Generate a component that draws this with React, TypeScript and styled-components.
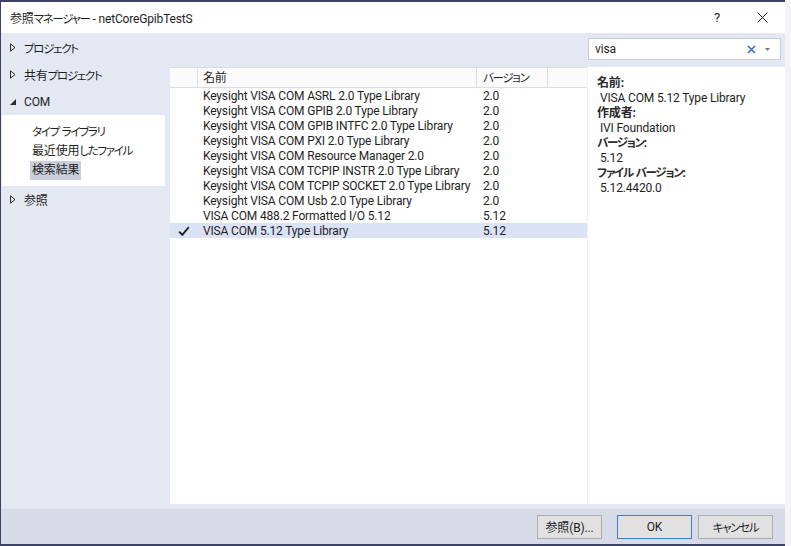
import React from 'react';
import styled, { createGlobalStyle } from 'styled-components';

const GlobalStyle = createGlobalStyle`
    html, body {
        margin: 0;
        padding: 0;
        background: #f4f4f7;
    }
    * {
        box-sizing: border-box;
    }
    body {
        font-family: Roboto, 'Noto Sans CJK JP', sans-serif;
        font-size: 12px;
        letter-spacing: -0.16px;
        font-feature-settings: 'palt';
        color: #1e1e1e;
    }
`;

const FRAME = '#3d4263';
const BODY_BG = '#e4e8f3';
const FONT = `Roboto, 'Noto Sans CJK JP', sans-serif`;

// kana in the original UI font are much narrower than in Noto CJK
const Kana = styled.span`
    font-size: 11.5px;
    letter-spacing: -1.3px;
`;

const KANA_RE = /([\u3040-\u30ff]+)/;

const JText: React.FC<{ children: string }> = ({ children }) => (
    <>
        {children.split(KANA_RE).map((part, i) =>
            i % 2 === 1 ? <Kana key={i}>{part}</Kana> : part
        )}
    </>
);

const Page = styled.div`
    width: 791px;
    height: 546px;
    display: flex;
`;

const Window = styled.div`
    width: 785px;
    height: 546px;
    display: flex;
    flex-direction: column;
    border-top: 2px solid ${FRAME};
    border-bottom: 2px solid ${FRAME};
    border-left: 1px solid ${FRAME};
    background: ${BODY_BG};
`;

const TitleBar = styled.div`
    height: 31px;
    flex: none;
    background: #ffffff;
    display: flex;
    align-items: center;
    padding: 0 13px 0 9px;
`;

const Title = styled.div`
    flex: 1;
    color: #1e1e1e;
`;

const TitleButton = styled.div`
    width: 20px;
    height: 20px;
    display: flex;
    align-items: center;
    justify-content: center;
    font-size: 13px;
    color: #1e1e1e;
    margin-left: 25px;
`;

const Body = styled.div`
    flex: 1;
    display: grid;
    grid-template-columns: 164px 5px 417px 198px;
    grid-template-rows: 34px 1fr;
    padding-bottom: 5px;
`;

const Nav = styled.div`
    grid-column: 1;
    grid-row: 1 / span 2;
    display: flex;
    flex-direction: column;
    padding-top: 1px;
`;

const NavItem = styled.div`
    height: 27px;
    display: flex;
    align-items: center;
    padding-left: 9px;
    gap: 8px;
`;

const SubPanel = styled.div`
    background: #ffffff;
    margin-left: 1px;
    padding: 8px 0 6px 28px;
    display: flex;
    flex-direction: column;
    align-items: flex-start;
`;

const SubItem = styled.div<{ selected?: boolean }>`
    height: 19px;
    line-height: 19px;
    padding: 0 2px;
    background: ${props => (props.selected ? '#cbcedb' : 'transparent')};
`;

const SearchBox = styled.div`
    grid-column: 4;
    grid-row: 1;
    margin: 5px 4px 7px 1px;
    background: #ffffff;
    border: 1px solid #c9ccd6;
    display: flex;
    align-items: center;
    padding: 0 6px 0 6px;
`;

const SearchText = styled.div`
    flex: 1;
`;

const Table = styled.div`
    grid-column: 3;
    grid-row: 2;
    background: #ffffff;
    display: flex;
    flex-direction: column;
`;

const Row = styled.div<{ header?: boolean; selected?: boolean }>`
    display: grid;
    grid-template-columns: 28px 279px 71px 1fr;
    height: ${props => (props.header ? '21px' : '15px')};
    line-height: ${props => (props.header ? '20px' : '16px')};
    background: ${props =>
        props.selected ? '#dce2f6' : props.header ? '#fbfbfc' : 'transparent'};
    border-top: ${props => (props.header ? '1px solid #dadde6' : 'none')};
    border-bottom: ${props => (props.header ? '1px solid #dadde6' : 'none')};
`;

const Cell = styled.div<{ header?: boolean; pad?: number }>`
    padding-left: ${props => props.pad ?? 5}px;
    padding-top: ${props => (props.header ? 0 : 1)}px;
    white-space: nowrap;
    overflow: hidden;
    border-right: ${props => (props.header ? '1px solid #dadde6' : 'none')};
    display: flex;
    align-items: center;
`;

const Detail = styled.div`
    grid-column: 4;
    grid-row: 2;
    background: #ffffff;
    border-left: 1px solid #f0f1f5;
    padding: 9px 0 0 9px;
    display: flex;
    flex-direction: column;
    line-height: 15px;
`;

const DetailLabel = styled.div`
    font-weight: 700;
    color: #2a2a2a;
`;

const DetailValue = styled.div`
    padding-left: 3px;
`;

const Footer = styled.div`
    height: 35px;
    flex: none;
    background: #d6dbe7;
    display: flex;
    align-items: center;
    justify-content: flex-end;
    padding-right: 12px;
`;

const Button = styled.button<{ w: number; primary?: boolean; gap: number }>`
    width: ${props => props.w}px;
    height: 24px;
    margin-left: ${props => props.gap}px;
    background: #e1e1e1;
    border: 1px solid ${props => (props.primary ? '#3c7fd1' : '#adadad')};
    font-family: ${FONT};
    font-size: 12px;
    letter-spacing: -0.16px;
    font-feature-settings: 'palt';
    color: #1e1e1e;
    padding: 0;
`;

const RightTri = () => (
    <svg width="6" height="9" viewBox="0 0 6 9">
        <path d="M0.5 0.8 L5 4.5 L0.5 8.2 Z" fill="none" stroke="#2b2b2b" strokeWidth="1" />
    </svg>
);

const DownTri = () => (
    <svg width="6" height="9" viewBox="0 0 6 9">
        <path d="M6 2 L6 8 L0 8 Z" fill="#2b2b2b" />
    </svg>
);

const Check = () => (
    <svg width="12" height="11" viewBox="0 0 12 11">
        <path d="M1.2 5.6 L4.3 8.8 L10.8 1.2" fill="none" stroke="#1e1e1e" strokeWidth="1.8" />
    </svg>
);

const rows = [
    ['Keysight VISA COM ASRL 2.0 Type Library', '2.0'],
    ['Keysight VISA COM GPIB 2.0 Type Library', '2.0'],
    ['Keysight VISA COM GPIB INTFC 2.0 Type Library', '2.0'],
    ['Keysight VISA COM PXI 2.0 Type Library', '2.0'],
    ['Keysight VISA COM Resource Manager 2.0', '2.0'],
    ['Keysight VISA COM TCPIP INSTR 2.0 Type Library', '2.0'],
    ['Keysight VISA COM TCPIP SOCKET 2.0 Type Library', '2.0'],
    ['Keysight VISA COM Usb 2.0 Type Library', '2.0'],
    ['VISA COM 488.2 Formatted I/O 5.12', '5.12'],
    ['VISA COM 5.12 Type Library', '5.12', true],
] as const;

export default function App() {
    return (
        <Page>
            <GlobalStyle />
            <Window>
                <TitleBar>
                    <Title><JText>参照マネージャー - netCoreGpibTestS</JText></Title>
                    <TitleButton>?</TitleButton>
                    <TitleButton>
                        <svg width="11" height="11" viewBox="0 0 11 11">
                            <path d="M0.5 0.5 L10.5 10.5 M10.5 0.5 L0.5 10.5" stroke="#1e1e1e" strokeWidth="1" />
                        </svg>
                    </TitleButton>
                </TitleBar>
                <Body>
                    <Nav>
                        <NavItem><RightTri /><span><JText>プロジェクト</JText></span></NavItem>
                        <NavItem><RightTri /><span><JText>共有プロジェクト</JText></span></NavItem>
                        <NavItem><DownTri />COM</NavItem>
                        <SubPanel>
                            <SubItem><JText>タイプ ライブラリ</JText></SubItem>
                            <SubItem><JText>最近使用したファイル</JText></SubItem>
                            <SubItem selected>検索結果</SubItem>
                        </SubPanel>
                        <NavItem><RightTri />参照</NavItem>
                    </Nav>
                    <SearchBox>
                        <SearchText>visa</SearchText>
                        <svg width="9" height="9" viewBox="0 0 9 9">
                            <path d="M1 1 L8 8 M8 1 L1 8" stroke="#2f6fcf" strokeWidth="1.6" />
                        </svg>
                        <svg width="14" height="9" viewBox="0 0 14 9" style={{ marginLeft: 4 }}>
                            <path d="M5 3 L10 3 L7.5 6 Z" fill="#777" />
                        </svg>
                    </SearchBox>
                    <Table>
                        <Row header>
                            <Cell header />
                            <Cell header>名前</Cell>
                            <Cell header pad={6}><JText>バージョン</JText></Cell>
                            <Cell />
                        </Row>
                        {rows.map(([name, ver, checked]) => (
                            <Row key={name} selected={!!checked}>
                                <Cell pad={8}>{checked && <Check />}</Cell>
                                <Cell>{name}</Cell>
                                <Cell pad={6}>{ver}</Cell>
                                <Cell />
                            </Row>
                        ))}
                    </Table>
                    <Detail>
                        <DetailLabel>名前:</DetailLabel>
                        <DetailValue>VISA COM 5.12 Type Library</DetailValue>
                        <DetailLabel>作成者:</DetailLabel>
                        <DetailValue>IVI Foundation</DetailValue>
                        <DetailLabel><JText>バージョン:</JText></DetailLabel>
                        <DetailValue>5.12</DetailValue>
                        <DetailLabel><JText>ファイル バージョン:</JText></DetailLabel>
                        <DetailValue>5.12.4420.0</DetailValue>
                    </Detail>
                </Body>
                <Footer>
                    <Button w={65} gap={0}>参照(B)...</Button>
                    <Button w={75} gap={15} primary>OK</Button>
                    <Button w={75} gap={6}><JText>キャンセル</JText></Button>
                </Footer>
            </Window>
        </Page>
    );
}
